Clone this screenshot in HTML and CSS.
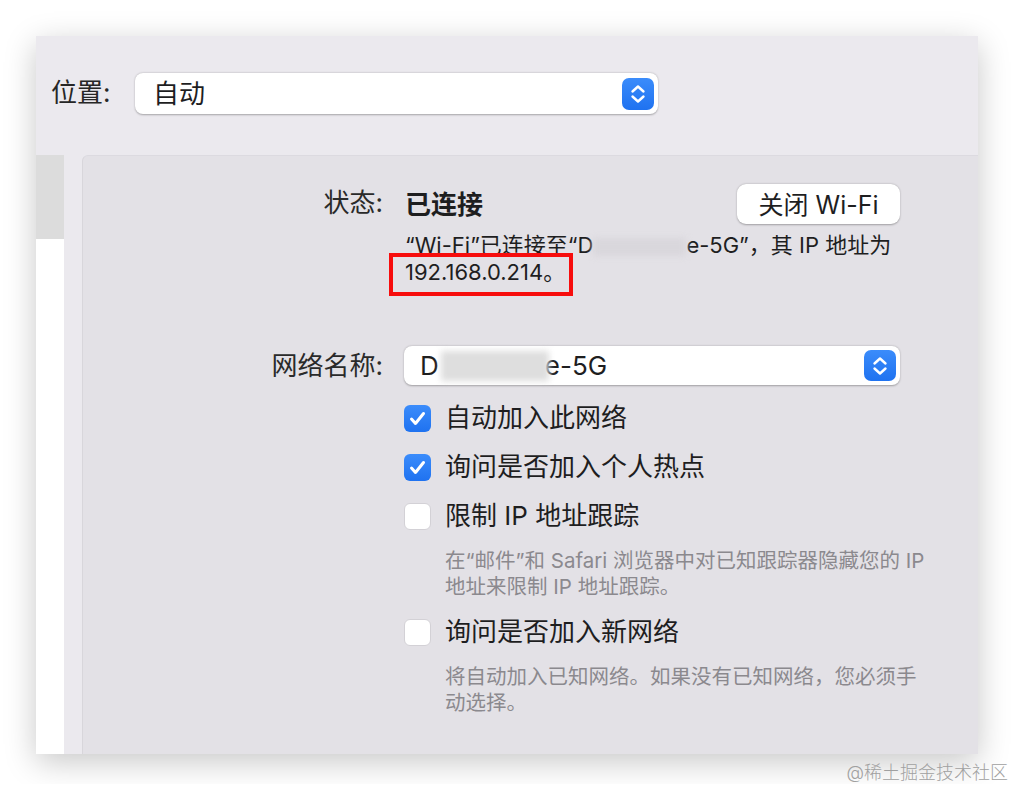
FILE: index.html
```html
<!doctype html>
<html lang="zh">
    <head>
        <meta charset="UTF-8" />
        <meta name="viewport" content="width=device-width, initial-scale=1.0" />
        <title>网络 - Wi-Fi</title>
        <link rel="stylesheet" href="styles.css">
    </head>
    <body>
        <div class="window">
            <div class="toolbar">
                <span class="field-label">位置:</span>
                <div class="popup location-popup">
                    <span class="popup-text">自动</span>
                    <span class="stepper">
                        <svg viewBox="0 0 32 32" width="32" height="32">
                            <path d="M10.5 13.5 L16 8.5 L21.5 13.5" />
                            <path d="M10.5 18.5 L16 23.5 L21.5 18.5" />
                        </svg>
                    </span>
                </div>
            </div>

            <div class="main">
                <div class="sidebar">
                    <div class="sidebar-selected"></div>
                </div>

                <div class="panel">
                    <div class="form">
                        <div class="label status-label">状态:</div>
                        <div class="value">
                            <div class="status-row">
                                <strong class="status-text">已连接</strong>
                                <button class="push-button">关闭 Wi-Fi</button>
                            </div>
                            <p class="status-desc">
                                “Wi-Fi”已连接至“D<span class="redact small"></span>e-5G”，其 IP 地址为<br>
                                <span class="ip-mark">192.168.0.214。</span>
                            </p>
                        </div>

                        <div class="label network-label">网络名称:</div>
                        <div class="value">
                            <div class="popup network-popup">
                                <span class="popup-text">D<span class="redact large"></span>e-5G</span>
                                <span class="stepper">
                                    <svg viewBox="0 0 32 32" width="32" height="32">
                                        <path d="M10.5 13.5 L16 8.5 L21.5 13.5" />
                                        <path d="M10.5 18.5 L16 23.5 L21.5 18.5" />
                                    </svg>
                                </span>
                            </div>

                            <div class="options">
                                <label class="option">
                                    <span class="checkbox checked">
                                        <svg viewBox="0 0 27 27" width="27" height="27"><path d="M7.5 14 L11.5 18.5 L19.5 8.5" /></svg>
                                    </span>
                                    自动加入此网络
                                </label>
                                <label class="option">
                                    <span class="checkbox checked">
                                        <svg viewBox="0 0 27 27" width="27" height="27"><path d="M7.5 14 L11.5 18.5 L19.5 8.5" /></svg>
                                    </span>
                                    询问是否加入个人热点
                                </label>
                                <label class="option">
                                    <span class="checkbox"></span>
                                    限制 IP 地址跟踪
                                </label>
                                <p class="hint">在“邮件”和 Safari 浏览器中对已知跟踪器隐藏您的 IP 地址来限制 IP 地址跟踪。</p>
                                <label class="option">
                                    <span class="checkbox"></span>
                                    询问是否加入新网络
                                </label>
                                <p class="hint">将自动加入已知网络。如果没有已知网络，您必须手动选择。</p>
                            </div>
                        </div>
                    </div>
                </div>
            </div>
        </div>

        <div class="watermark">@稀土掘金技术社区</div>
    </body>
</html>
```

FILE: styles.css
```css
body {
    margin: 0;
    padding: 36px 0 0 36px;
    background-color: #fff;
    font-family: Inter, "Noto Sans CJK SC", sans-serif;
    color: #1e1e1f;
}
.window {
    width: 942px;
    height: 718px;
    background-color: #ebe9ee;
    box-shadow: 0 8px 30px rgba(0, 0, 0, 0.22);
    display: flex;
    flex-direction: column;
    overflow: hidden;
}
.toolbar {
    height: 119px;
    flex: none;
    box-sizing: border-box;
    padding: 37px 0 0 15px;
    display: flex;
    align-items: flex-start;
}
.field-label {
    font-size: 26px;
    line-height: 39px;
    width: 84px;
    color: #262626;
}
.popup {
    background-color: #fff;
    border-radius: 8px;
    box-shadow: 0 0.5px 2px rgba(0, 0, 0, 0.3);
    display: flex;
    align-items: center;
    justify-content: space-between;
    box-sizing: border-box;
    font-size: 26px;
}
.location-popup {
    width: 523px;
    height: 41px;
    padding: 0 4px 0 18px;
}
.location-popup .popup-text {
    margin-top: -4px;
}
.network-popup {
    width: 496px;
    height: 39px;
    padding: 0 4px 0 16px;
}
.popup-text {
    display: flex;
    align-items: center;
}
.stepper {
    width: 32px;
    height: 32px;
    border-radius: 7px;
    background: linear-gradient(#3b8cfb, #1f72f0);
    display: block;
}
.stepper svg {
    display: block;
    fill: none;
    stroke: #fff;
    stroke-width: 2.4;
    stroke-linecap: round;
    stroke-linejoin: round;
}
.network-popup .stepper {
    height: 31px;
}
.redact {
    display: inline-block;
    background-color: #d9d7dc;
    filter: blur(3px);
}
.redact.small {
    width: 93px;
    height: 18px;
    vertical-align: -3px;
}
.redact.large {
    width: 108px;
    height: 30px;
    background-color: #dedede;
    margin: 0 -4px 0 2px;
}
.main {
    flex: 1;
    display: flex;
}
.sidebar {
    width: 28px;
    background-color: #fff;
}
.sidebar-selected {
    height: 84px;
    background-color: #dcdcdc;
}
.panel {
    flex: 1;
    margin-left: 18px;
    background-color: #e3e1e6;
    border-top: 1px solid #dcdae0;
    border-left: 1px solid #d8d6db;
    border-top-left-radius: 6px;
    padding: 28px 78px 0 0;
}
.form {
    display: grid;
    grid-template-columns: 300px 1fr;
    column-gap: 21px;
    row-gap: 60px;
}
.label {
    font-size: 26px;
    text-align: right;
    color: #2a2a2a;
}
.status-label {
    line-height: 38px;
}
.network-label {
    line-height: 39px;
}
.status-row {
    display: flex;
    justify-content: space-between;
    align-items: center;
    height: 40px;
}
.status-text {
    font-size: 26px;
    font-weight: 700;
    padding-left: 1px;
    margin-top: -3px;
}
.push-button {
    width: 163px;
    height: 40px;
    border: none;
    border-radius: 9px;
    background-color: #fff;
    box-shadow: 0 0.5px 2px rgba(0, 0, 0, 0.3);
    font-family: inherit;
    font-size: 25px;
    color: #1e1e1f;
    padding: 0 0 3px;
}
.status-desc {
    margin: 8px 0 0 1px;
    font-size: 22px;
    line-height: 27px;
}
.ip-mark {
    position: relative;
}
.ip-mark::after {
    content: "";
    position: absolute;
    left: -16px;
    right: -8px;
    top: -6px;
    bottom: -11px;
    border: 4px solid #f70d0d;
}
.options {
    margin-top: 16px;
    display: flex;
    flex-direction: column;
}
.option {
    display: flex;
    align-items: center;
    font-size: 26px;
    line-height: 34px;
    margin-top: 15px;
}
.option:first-child {
    margin-top: 0;
}
.checkbox {
    width: 27px;
    height: 27px;
    box-sizing: border-box;
    border-radius: 6px;
    margin-right: 14px;
    background-color: #fff;
    border: 1px solid #d3d1d6;
    flex: none;
}
.checkbox.checked {
    border: none;
    background: linear-gradient(#3b8cfb, #1f72f0);
}
.checkbox svg {
    display: block;
    fill: none;
    stroke: #fff;
    stroke-width: 3;
    stroke-linecap: round;
    stroke-linejoin: round;
}
.hint {
    margin: 15px -30px 0 41px;
    font-size: 20.5px;
    line-height: 26px;
    color: #8b898e;
}
.watermark {
    width: 972px;
    text-align: right;
    margin-top: 8px;
    font-size: 18px;
    line-height: 22px;
    font-weight: 300;
    color: #a0a0a0;
}
```
